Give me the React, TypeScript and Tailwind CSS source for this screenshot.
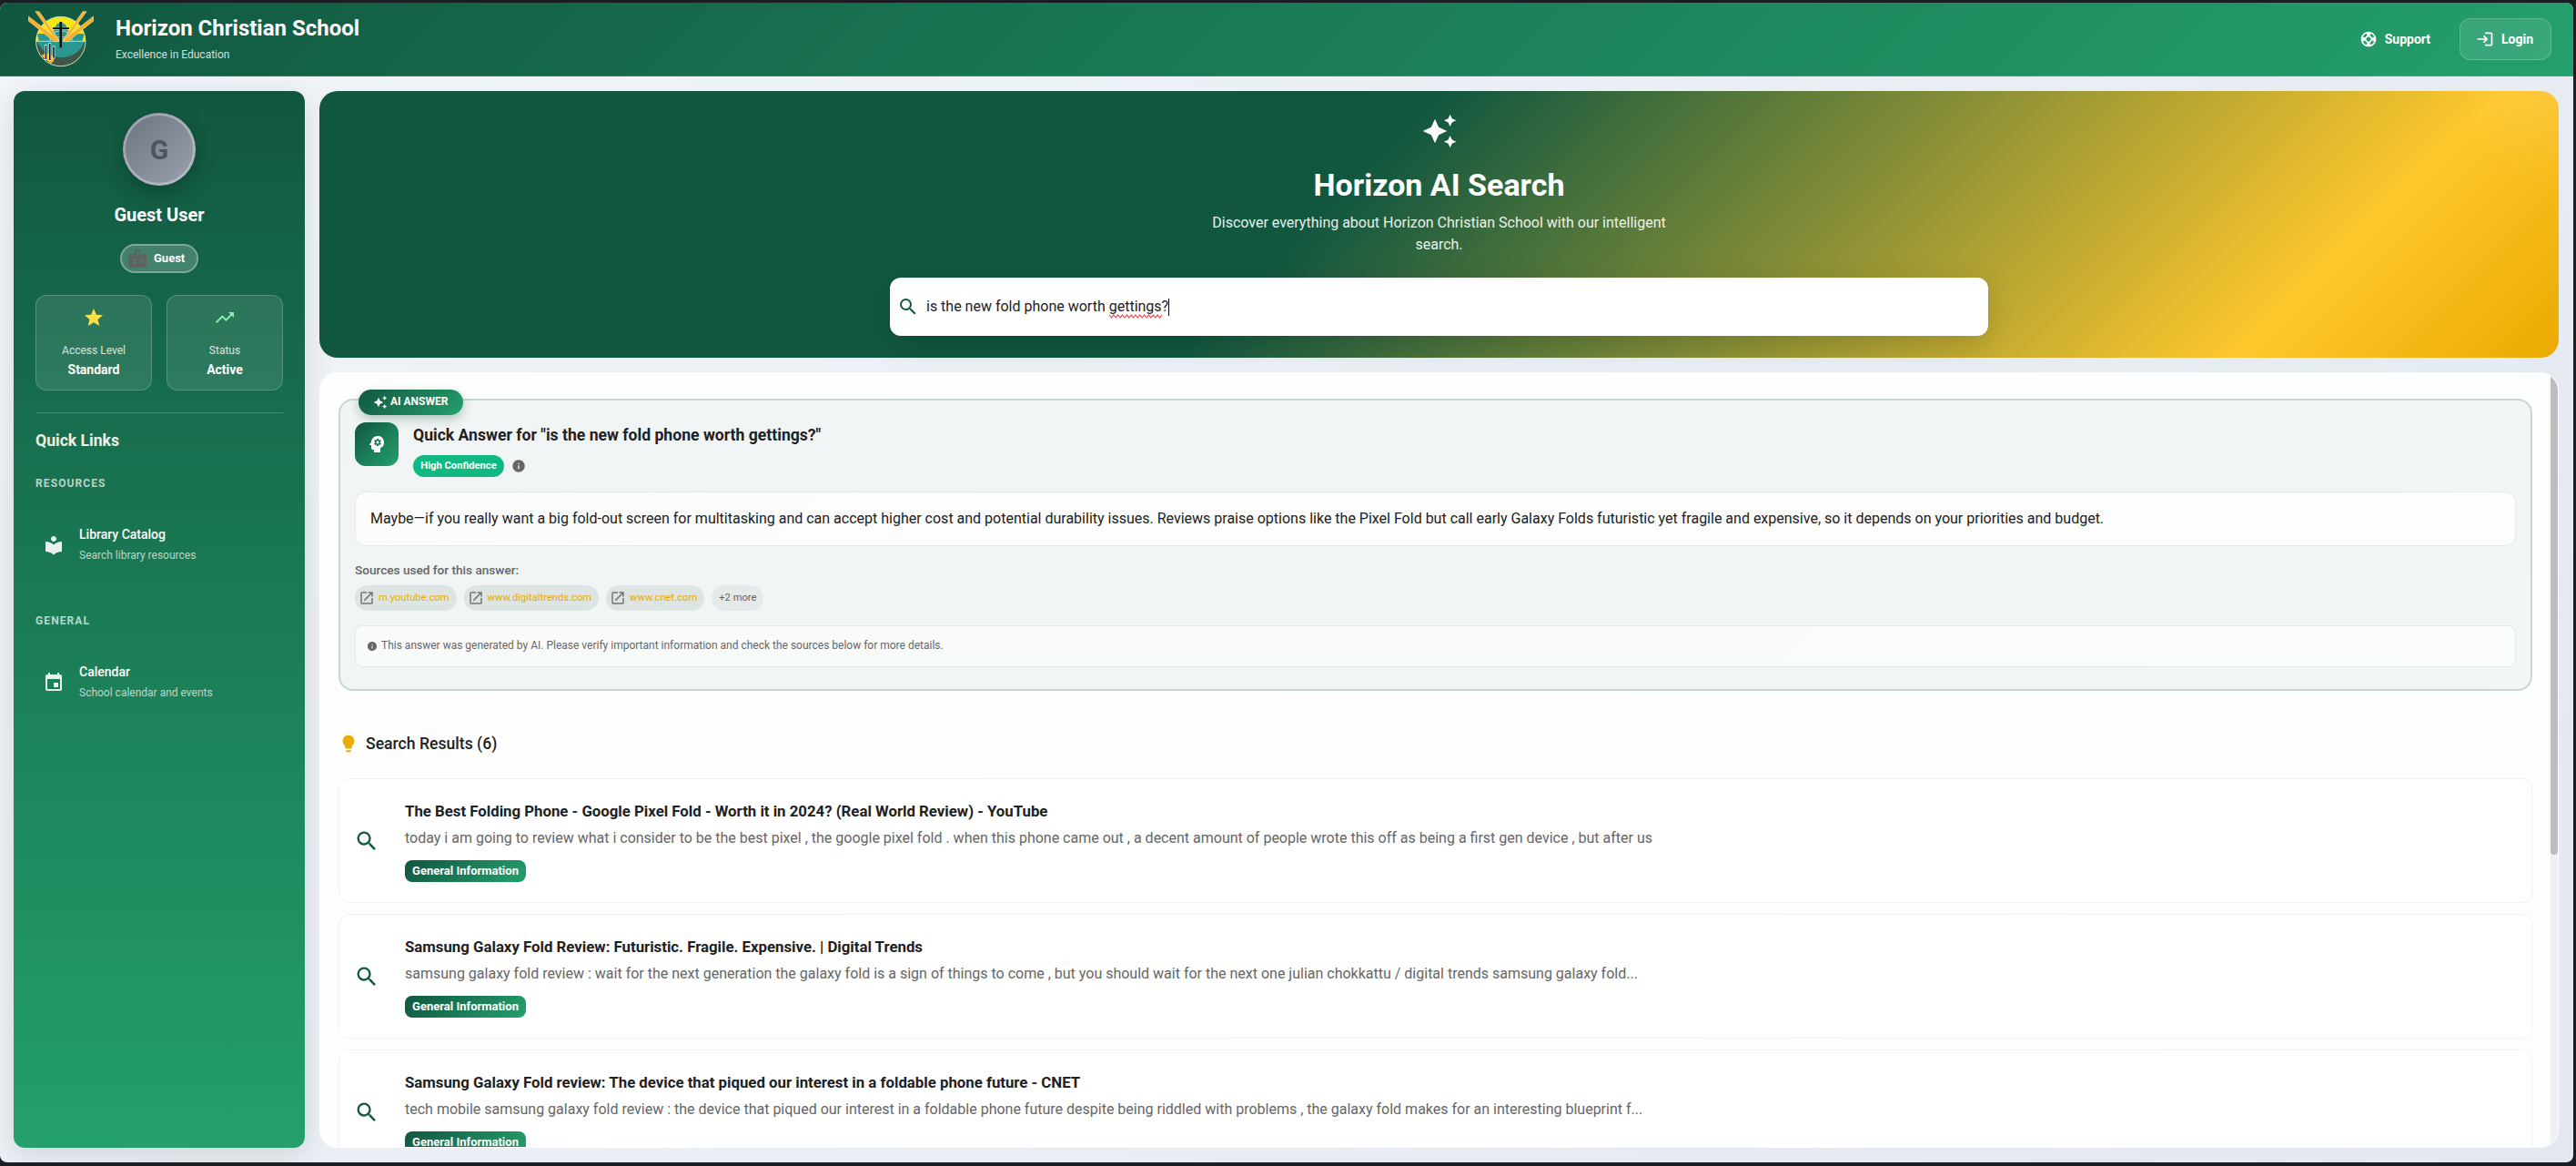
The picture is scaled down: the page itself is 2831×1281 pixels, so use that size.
import React from "react";
import {
  MdAutoAwesome,
  MdBadge,
  MdEvent,
  MdInfo,
  MdLightbulb,
  MdLocalLibrary,
  MdLogin,
  MdOpenInNew,
  MdPsychology,
  MdSearch,
  MdStar,
  MdSupport,
  MdTrendingUp,
} from "react-icons/md";

function Logo() {
  return (
    <svg viewBox="0 0 72 62" className="h-[62px] w-[72px] shrink-0">
      <defs>
        <clipPath id="disc">
          <circle cx="35.8" cy="33.5" r="27.2" />
        </clipPath>
      </defs>
      <g clipPath="url(#disc)">
        <rect width="72" height="62" fill="#f3e70c" />
        <path d="M10 25H27L31 15L36 12L41 15L45 25H62L59 34H12Z" fill="#2a9790" />
        <rect y="33.5" width="72" height="30" fill="#3d574b" />
        <path d="M10 33.5H62C58 44 49 51 36 51C23 51 14 43 10 33.5Z" fill="#2a9790" />
        <path d="M14 49L20 46L29 50L28 55L25 58Z" fill="#fbb024" />
      </g>
      <g fill="none" stroke="#cfe3d4" strokeWidth="0.9">
        <circle cx="35.8" cy="33.5" r="27.2" />
        <path d="M9 33.3H63M24 33C24 25 29 22 36 22C43 22 48 25 48 33M28 33C28 27 43 27 44 33" />
      </g>
      <g fill="#fbb024" stroke="#e9dfb4" strokeWidth="0.7">
        <path d="M8 .8H12L34 32L31 33L27 27Z" />
        <path d="M.3 6V11L29 34L34 33L26 26Z" />
        <path d="M64 .8H60L38 32L41 33L45 27Z" />
        <path d="M71.7 6V11L43 34L38 33L46 26Z" />
      </g>
      <path d="M35.8 12V40.6M27 19.2H45" stroke="#cfe3d4" strokeWidth="3.6" opacity=".5" />
      <path d="M35.8 12V40.6" stroke="#0c0f10" strokeWidth="2.8" />
      <path d="M27 19.2H45" stroke="#0c0f10" strokeWidth="1.8" />
      <path d="M19.5 37V54M23.8 35V55M28 38.5V52.5" stroke="#e8efe9" strokeWidth="2.8" />
      <path d="M19.5 38V53M23.8 36V54M28 39.5V51.5" stroke="#0c0f10" strokeWidth="1.5" />
    </svg>
  );
}

function Header() {
  return (
    <header className="flex h-[81px] shrink-0 items-center justify-between border-b border-white/15 bg-[linear-gradient(135deg,#115740_0%,#24a06c_100%)] pr-6 pl-[31px] text-white">
      <div className="flex items-center gap-6">
        <Logo />
        <div>
          <div className="text-[24px] leading-[29px] font-bold">Horizon Christian School</div>
          <div className="mt-1 text-[12px] leading-5 text-white/80">Excellence in Education</div>
        </div>
      </div>
      <div className="flex items-center gap-8 text-[14px] font-bold">
        <div className="flex items-center gap-2">
          <MdSupport className="size-5" />
          <span>Support</span>
        </div>
        <div className="flex h-[46px] w-[101px] items-center justify-center gap-2 rounded-xl border border-white/20 bg-white/10 pr-0.5">
          <MdLogin className="size-5" />
          <span>Login</span>
        </div>
      </div>
    </header>
  );
}

function Stat({ icon, label, value }: { icon: React.ReactNode; label: string; value: string }) {
  return (
    <div className="flex h-[105px] flex-1 flex-col items-center rounded-xl border border-white/20 bg-white/10 pt-3">
      {icon}
      <div className="mt-[14px] text-[12px] leading-5 text-white/80">{label}</div>
      <div className="mt-px text-[14px] leading-5 font-bold">{value}</div>
    </div>
  );
}

function LinkGroup({ heading, icon, title, text }: { heading: string; icon: React.ReactNode; title: string; text: string }) {
  return (
    <div className="h-[151px]">
      <div className="text-[12px] leading-5 font-bold tracking-[1.1px] text-white/70">{heading}</div>
      <div className="mt-[35px] flex items-center gap-4 pl-2">
        {icon}
        <div>
          <div className="text-[14px] leading-[22px] font-medium">{title}</div>
          <div className="text-[12px] leading-6 text-white/70">{text}</div>
        </div>
      </div>
    </div>
  );
}

function Sidebar() {
  return (
    <aside className="flex w-80 shrink-0 flex-col rounded-xl bg-[linear-gradient(180deg,#115740_0%,#24a06c_100%)] px-6 pt-6 text-white shadow-[0_8px_32px_rgba(0,0,0,0.12)]">
      <div className="flex flex-col items-center">
        <div className="flex size-20 items-center justify-center rounded-full border-[3px] border-white/30 bg-[linear-gradient(135deg,#6b7280,#9ca3af)] bg-origin-border text-[30px] font-bold text-[#4b5563] shadow-[0_8px_24px_rgba(0,0,0,0.25)]">
          G
        </div>
        <div className="mt-5 text-[20px] leading-6 font-bold">Guest User</div>
        <div className="mt-5 flex h-8 w-[86px] items-center gap-2 rounded-full border-2 border-white/30 bg-white/20 pl-[7px] text-[13px] font-bold">
          <MdBadge className="-ml-0.5 size-6 text-[#616161]" />
          <span className="-ml-0.5">Guest</span>
        </div>
      </div>
      <div className="mt-6 flex gap-4">
        <Stat icon={<MdStar className="size-6 text-[#fde047]" />} label="Access Level" value="Standard" />
        <Stat icon={<MdTrendingUp className="size-6 text-[#86efac]" />} label="Status" value="Active" />
      </div>
      <div className="mt-6 h-px bg-white/20" />
      <div className="mt-[18px] text-[17.6px] leading-6 font-bold text-white/90">Quick Links</div>
      <div className="mt-[25px]">
        <LinkGroup
          heading="RESOURCES"
          icon={<MdLocalLibrary className="size-6 text-white/90" />}
          title="Library Catalog"
          text="Search library resources"
        />
        <LinkGroup
          heading="GENERAL"
          icon={<MdEvent className="size-6 text-white/90" />}
          title="Calendar"
          text="School calendar and events"
        />
      </div>
    </aside>
  );
}

function Hero() {
  return (
    <section className="flex h-[293px] shrink-0 flex-col items-center rounded-[20px] bg-[radial-gradient(circle_at_100%_0%,rgba(255,255,255,0.1),transparent_110px),linear-gradient(135deg,#115740_0%,#115740_45%,#ffc72c_87.2%,#eaaa00_100%)] pt-6 text-white">
      <MdAutoAwesome className="size-10" />
      <h1 className="mt-[18px] text-[34px] leading-[42px] font-bold">Horizon AI Search</h1>
      <p className="mt-[9px] w-[500px] text-center text-[16px] leading-6 text-white/90">
        Discover everything about Horizon Christian School with our intelligent search.
      </p>
      <div className="mt-6 flex h-16 w-[1207px] shrink-0 items-center gap-2 rounded-xl bg-white pl-2 text-[16px] text-[#212121] shadow-[0_8px_32px_rgba(0,0,0,0.15)]">
        <MdSearch className="size-6 text-[#115740]" />
        <span className="flex items-center whitespace-pre">
          is the new fold phone worth{" "}
          <span className="relative">
            gettings
            <svg className="absolute -bottom-px left-0 h-[5px] w-full" preserveAspectRatio="none" viewBox="0 0 60 5">
              <path
                d="M0 1L2.5 4L5 1L7.5 4L10 1L12.5 4L15 1L17.5 4L20 1L22.5 4L25 1L27.5 4L30 1L32.5 4L35 1L37.5 4L40 1L42.5 4L45 1L47.5 4L50 1L52.5 4L55 1L57.5 4L60 1"
                fill="none"
                stroke="#f02c2c"
                strokeWidth="1.1"
              />
            </svg>
          </span>
          ?<span className="h-[19px] w-px bg-black" />
        </span>
      </div>
    </section>
  );
}

function Source({ name }: { name: string }) {
  return (
    <div className="flex h-7 items-center gap-1 rounded-[14px] bg-[#dce5e1] pr-2 pl-1 text-[11.2px] text-[#eaaa00]">
      <MdOpenInNew className="size-[18px] text-[#757575]" />
      <span>{name}</span>
    </div>
  );
}

function AnswerCard() {
  return (
    <section className="relative h-[321px] rounded-2xl border-2 border-[#c3d8d0] bg-[linear-gradient(135deg,#f1f4f4,#f1f7f5)] px-4 pt-6 text-[#212121]">
      <div className="absolute -top-3 left-5 flex h-7 w-[115px] items-center gap-[3px] rounded-2xl bg-[linear-gradient(135deg,#115740,#24a06c)] pl-4 text-[12px] font-bold text-white shadow-[0_4px_12px_rgba(17,87,64,0.3)]">
        <MdAutoAwesome className="size-4" />
        <span className="-mt-0.5">AI ANSWER</span>
      </div>
      <div className="flex gap-4">
        <div className="flex size-12 items-center justify-center rounded-xl bg-[linear-gradient(135deg,#115740,#24a06c)] text-white">
          <MdPsychology className="size-6" />
        </div>
        <div>
          <div className="text-[17.6px] leading-7 font-bold">Quick Answer for "is the new fold phone worth gettings?"</div>
          <div className="mt-2 flex items-center gap-2">
            <span className="flex h-6 w-[100px] items-center justify-center rounded-full bg-[#10b981] text-[11.2px] font-bold text-white">
              High Confidence
            </span>
            <MdInfo className="size-4 text-[#666]" />
          </div>
        </div>
      </div>
      <div className="mt-4 flex h-[60px] items-center rounded-xl border border-[#e3eae8] bg-white/75 px-4 text-[16px]">
        Maybe—if you really want a big fold-out screen for multitasking and can accept higher cost and potential durability issues. Reviews praise options like the Pixel Fold but call early Galaxy Folds futuristic yet fragile and expensive, so it depends on your priorities and budget.
      </div>
      <div className="mt-4 text-[13.6px] leading-5 font-medium text-[#666]">Sources used for this answer:</div>
      <div className="mt-[7px] flex gap-2">
        <Source name="m.youtube.com" />
        <Source name="www.digitaltrends.com" />
        <Source name="www.cnet.com" />
        <div className="flex h-7 items-center rounded-[14px] bg-[#e5e9e9] px-2 text-[11.2px] text-[#666]">+2 more</div>
      </div>
      <div className="mt-4 flex h-[46px] items-center gap-1 rounded-lg border border-[#e2e7e7] bg-white/60 px-3 text-[12px] text-[#666]">
        <MdInfo className="size-3" />
        <span className="-mt-0.5">This answer was generated by AI. Please verify important information and check the sources below for more details.</span>
      </div>
    </section>
  );
}

const results = [
  {
    title: "The Best Folding Phone - Google Pixel Fold - Worth it in 2024? (Real World Review) - YouTube",
    text: "today i am going to review what i consider to be the best pixel , the google pixel fold . when this phone came out , a decent amount of people wrote this off as being a first gen device , but after us",
  },
  {
    title: "Samsung Galaxy Fold Review: Futuristic. Fragile. Expensive. | Digital Trends",
    text: "samsung galaxy fold review : wait for the next generation the galaxy fold is a sign of things to come , but you should wait for the next one julian chokkattu / digital trends samsung galaxy fold...",
  },
  {
    title: "Samsung Galaxy Fold review: The device that piqued our interest in a foldable phone future - CNET",
    text: "tech mobile samsung galaxy fold review : the device that piqued our interest in a foldable phone future despite being riddled with problems , the galaxy fold makes for an interesting blueprint f...",
  },
];

function Results() {
  return (
    <section className="flex min-h-0 flex-1 overflow-hidden rounded-[20px] border border-white/60 bg-[linear-gradient(135deg,#fefefe,#fcfdff)]">
      <div className="min-w-0 flex-1 overflow-hidden pt-7 pr-5 pl-5">
        <AnswerCard />
        <div className="mt-11 flex h-7 items-center gap-2 text-[17.6px] font-medium text-[#212121]">
          <MdLightbulb className="size-[22px] text-[#eaaa00]" />
          <span>Search Results (6)</span>
        </div>
        <div className="mt-6 flex flex-col gap-3">
          {results.map((r) => (
            <article key={r.title} className="flex h-[137px] shrink-0 items-center rounded-xl border border-[#f1f2f2] bg-white pl-4">
              <MdSearch className="size-7 shrink-0 text-[#115740]" />
              <div className="ml-7">
                <div className="text-[16.8px] leading-6 font-bold text-[#212121]">{r.title}</div>
                <div className="mt-1.5 text-[16px] leading-6 text-[#666]">{r.text}</div>
                <div className="mt-3 flex h-6 w-[133px] items-center justify-center rounded-lg bg-[linear-gradient(135deg,#115740,#24a06c)] text-[13px] font-bold text-white">
                  General Information
                </div>
              </div>
            </article>
          ))}
        </div>
      </div>
      <div className="w-2 shrink-0 bg-[#efefef]">
        <div className="h-[529px] rounded bg-[#bdbdbd]" />
      </div>
    </section>
  );
}

export default function App() {
  return (
    <div className="h-[1281px] w-[2831px] overflow-hidden bg-[#1a1d21] pt-[3px] pr-[3px] pb-1 font-[Roboto,sans-serif]">
      <div className="flex h-full flex-col overflow-hidden rounded-lg bg-[linear-gradient(135deg,#f1f5f9_0%,#e2e8f0_100%)]">
        <Header />
        <div className="flex min-h-0 flex-1 gap-4 py-4 pr-4 pl-[15px]">
          <Sidebar />
          <main className="flex min-w-0 flex-1 flex-col gap-4">
            <Hero />
            <Results />
          </main>
        </div>
      </div>
    </div>
  );
}
